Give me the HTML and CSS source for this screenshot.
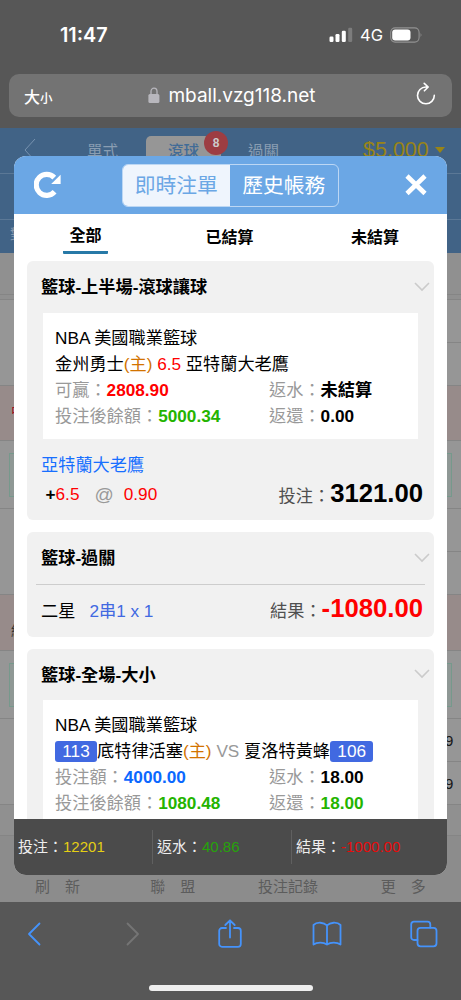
FILE: index.html
```html
<!DOCTYPE html>
<html lang="zh-Hant">
<head>
<meta charset="utf-8">
<meta name="viewport" content="width=device-width">
<title>即時注單</title>
<link rel="stylesheet" href="styles.css">
</head>
<body>
<div class="phone">
  <header class="browser-top">
    <div class="status">
      <span class="time">11:47</span>
      <span class="signals">
        <svg class="bars" width="24" height="16" viewBox="0 0 24 16"><rect x="0.5" y="9.5" width="4" height="5.5" rx="1.2" fill="#fff"/><rect x="6.5" y="7" width="4" height="8" rx="1.2" fill="#fff"/><rect x="12.8" y="3.8" width="4" height="11.2" rx="1.2" fill="#fff"/><rect x="19.2" y="0.8" width="4" height="14.2" rx="1.2" fill="#7c7c7c"/></svg>
        <span class="net">4G</span>
        <svg class="battery" width="33" height="16" viewBox="0 0 33 16"><rect x="0.7" y="0.9" width="28.4" height="14.2" rx="4.5" fill="none" stroke="#929292" stroke-width="1.1"/><rect x="2.2" y="2.5" width="18.3" height="11" rx="3" fill="#fff"/><path d="M30.6 5.8q1.8 2.2 0 4.5z" fill="#929292"/></svg>
      </span>
    </div>
    <div class="address">
      <span class="size">大<small>小</small></span>
      <span class="url"><svg width="12" height="17" viewBox="0 0 12 17"><path d="M3 8V4.5a3 3.4 0 0 1 6 0V8" fill="none" stroke="#b8b7bd" stroke-width="1.3"/><rect x="0.4" y="7" width="11" height="9" rx="1.5" fill="#b8b7bd"/></svg>mball.vzg118.net</span>
      <svg class="reload" width="20" height="24" viewBox="0 0 20 24" fill="none" stroke="#fff" stroke-width="1.6" stroke-linecap="round" stroke-linejoin="round"><path d="M12 5H9.900a8.400 8.400 0 1 0 8.400 8.400M8.200 1.300L12.200 5 8.400 8.800"/></svg>
    </div>
  </header>

  <main class="page">
    <div class="site-nav">
      <svg class="nav-back" width="12" height="24" viewBox="0 0 12 24"><path d="M11 1L1 12L11 23" fill="none" stroke="#7893b0" stroke-width="1"/></svg>
      <span class="nav-item">單式</span>
      <span class="nav-item active">滾球<b class="badge">8</b></span>
      <span class="nav-item">過關</span>
      <span class="balance">$5,000<i class="caret"></i></span>
    </div>
    <div class="site-sub"></div>
    <div class="site-head">對</div>
    <div class="row gap-a"></div>
    <div class="row gap-b"></div>
    <div class="row pair"><i></i></div>
    <div class="row pink red">中</div>
    <div class="row pick"><i></i></div>
    <div class="row pair"><i></i></div>
    <div class="row pink">紐</div>
    <div class="row pick"><i></i></div>
    <div class="row pair last"><i>9</i><i>9</i></div>
    <div class="row gap-c"></div>
    <nav class="site-foot"><span>刷　新</span><span>聯　盟</span><span>投注記錄</span><span>更　多</span></nav>

    <section class="modal">
      <div class="modal-head">
        <svg width="28" height="28" viewBox="0 0 28 28"><path d="M20.600 20.800A10.500 10.500 0 1 1 20.300 6.600" fill="none" stroke="#fff" stroke-width="5.200"/><path d="M26.600 3.800V13H17.200Z" fill="#fff"/></svg>
        <div class="switch"><span class="on">即時注單</span><span>歷史帳務</span></div>
        <svg width="28" height="28" viewBox="0 0 28 28"><path d="M5 5L23 22.5M23 5L5 22.5" stroke="#fff" stroke-width="4.6"/></svg>
      </div>
      <div class="tabs"><span class="on">全部</span><span>已結算</span><span>未結算</span></div>
      <div class="list">
        <article class="card first">
          <h3>籃球-上半場-滾球讓球<svg width="16" height="10" viewBox="0 0 16 10"><path d="M1 1L8 8L15 1"/></svg></h3>
          <div class="detail">
            <p>NBA 美國職業籃球</p>
            <p>金州勇士<span class="home">(主)</span> <span class="red-text">6.5</span> 亞特蘭大老鷹</p>
            <p class="pairs"><span>可贏：<b class="red-text">2808.90</b></span><span>返水：<b>未結算</b></span></p>
            <p class="pairs"><span>投注後餘額：<b class="green">5000.34</b></span><span>返還：<b>0.00</b></span></p>
          </div>
          <p class="team">亞特蘭大老鷹</p>
          <div class="stake"><span class="odds"><b>+</b><em>6.5</em><span class="at">@</span><em>0.90</em></span><span class="sum">投注：<b>3121.00</b></span></div>
        </article>
        <article class="card parlay">
          <h3>籃球-過關<svg width="16" height="10" viewBox="0 0 16 10"><path d="M1 1L8 8L15 1"/></svg></h3>
          <div class="stake"><span>二星<span class="combo">2串1 x 1</span></span><span class="sum loss">結果：<b>-1080.00</b></span></div>
        </article>
        <article class="card">
          <h3>籃球-全場-大小<svg width="16" height="10" viewBox="0 0 16 10"><path d="M1 1L8 8L15 1"/></svg></h3>
          <div class="detail">
            <p>NBA 美國職業籃球</p>
            <p><span class="score">113</span>底特律活塞<span class="home">(主)</span> <span class="vs">VS</span> 夏洛特黃蜂<span class="score">106</span></p>
            <p class="pairs"><span>投注額：<b class="blue">4000.00</b></span><span>返水：<b>18.00</b></span></p>
            <p class="pairs"><span>投注後餘額：<b class="green">1080.48</b></span><span>返還：<b class="green">18.00</b></span></p>
          </div>
        </article>
      </div>
      <div class="totals"><span>投注：<i class="t-yellow">12201</i></span><span>返水：<i class="t-green">40.86</i></span><span>結果：<i class="t-red">-1000.00</i></span></div>
    </section>
  </main>

  <footer class="browser-bottom">
    <div class="tools">
      <svg width="14" height="24" viewBox="0 0 14 24"><path d="M12.5 1.5L2 12L12.5 22.5"/></svg>
      <svg class="off" width="14" height="24" viewBox="0 0 14 24"><path d="M1.5 1.5L12 12L1.5 22.5"/></svg>
      <svg width="24" height="30" viewBox="0 0 24 30"><path d="M8 9H4a2.800 2.800 0 0 0-2.800 2.800V25A2.800 2.800 0 0 0 4 27.800H20A2.800 2.800 0 0 0 22.800 25V11.800A2.800 2.800 0 0 0 20 9H16M12 18.500V1.500M7.300 6L12 1.300L16.700 6"/></svg>
      <svg width="30" height="26" viewBox="0 0 30 26"><path d="M15 4.500C12 1.300 5 .5 1.500 4V23.500C5 21 11.500 21 15 23.500C18.500 21 25 21 28.500 23.500V4C25 .5 18 1.300 15 4.500V23.500"/></svg>
      <svg width="28" height="28" viewBox="0 0 28 28"><path d="M7.500 20H4A2.800 2.800 0 0 1 1.200 17.200V4.500A2.800 2.800 0 0 1 4 1.700H17.500A2.800 2.800 0 0 1 20.300 4.500V7.500"/><rect x="7.500" y="7.800" width="19" height="18.500" rx="3"/></svg>
    </div>
    <div class="home-bar"></div>
  </footer>
</div>
</body>
</html>
```
FILE: styles.css
```css
* { box-sizing: border-box; }
body { margin: 0; background: #575757; font-family: "Liberation Sans", "Noto Sans CJK TC", sans-serif; font-size: 17.2px; color: #000; }
p, h3 { margin: 0; }
i, em { font-style: normal; }
svg { display: block; flex: none; }
.phone { display: flex; flex-direction: column; width: 461px; height: 1000px; overflow: hidden; background: #575757; }

.browser-top { flex: none; height: 128px; color: #fff; font-family: Inter, "Noto Sans CJK TC", sans-serif; }
.status { display: flex; justify-content: space-between; align-items: center; height: 74px; padding: 0 38px 5px 60px; }
.time { font-size: 19.8px; font-weight: 600; }
.signals { display: flex; align-items: center; }
.net { margin: 1px 7px 0 7px; font-size: 16.5px; font-weight: 400; }
.address { display: flex; justify-content: space-between; align-items: center; height: 43px; margin: 0 9px; padding: 0 16px 0 15px; border-radius: 10px; background: #737373; }
.size { width: 60px; font-size: 16px; font-weight: 500; }
.size small { font-size: 12.5px; }
.url { display: flex; align-items: center; gap: 8px; margin-right: 36px; font-size: 19px; }
.reload { margin-bottom: 3px; }

.page { position: relative; flex: none; height: 774px; background: #969696; }
.site-nav { display: flex; align-items: center; height: 46px; padding-left: 24px; background: #416386; border-bottom: 1px solid #5b7896; color: #899db2; font-size: 15.5px; }
.nav-back { margin-bottom: 2px; }
.nav-item { position: relative; width: 75px; height: 31px; line-height: 31px; border-radius: 5px; text-align: center; margin-left: 29px; margin-top: 1px; }
.nav-item + .nav-item { margin-left: 5px; }
.nav-item + .nav-item.active { margin-left: 6px; background: #969696; color: #416b97; font-weight: 500; }
.badge { position: absolute; top: -5px; right: -7px; width: 24px; height: 24px; border-radius: 50%; background: #9d3d42; color: #ccc; font-size: 12px; line-height: 24px; text-align: center; }
.balance { display: flex; align-items: center; gap: 6px; margin: 0 0 1px 62px; font-size: 21.5px; color: #998416; }
.caret { border: 5px solid transparent; border-top: 6px solid #998416; border-bottom: 0; }
.site-sub { height: 46px; background: #416386; border-bottom: 1px solid #5b7896; }
.site-head { height: 33px; padding-left: 10px; line-height: 28px; background: #416386; color: #8799ad; font-size: 14px; }
.row { border-bottom: 1px solid #858585; }
.gap-a { height: 42px; background: #909090; }
.gap-b { height: 5px; background: #909090; }
.gap-c { height: 31px; background: #909090; }
.pair { height: 86px; padding-left: 440px; }
.pair i { display: block; height: 43px; border-bottom: 1px solid #858585; }
.pair.last i { line-height: 43px; padding-left: 5px; font-size: 15px; color: #161616; }
.pair.last i:last-child { border: 0; }
.pink { height: 56px; padding-left: 11px; line-height: 72px; background: #978b8a; font-size: 14px; color: #333; }
.pink.red { height: 55px; line-height: 51px; color: #a00e20; }
.pick { height: 68px; padding: 12px 9px; }
.pick i { display: block; height: 44px; border: 1.5px solid #76998c; background: #8f9895; }
.site-foot { display: grid; grid-template-columns: repeat(4, 1fr); height: 66px; padding-top: 40px; background: #8c8c8c; color: #5c5c5c; font-size: 15px; line-height: 22px; text-align: center; }

.modal { position: absolute; left: 14px; top: 27.5px; width: 433px; height: 719px; display: flex; flex-direction: column; overflow: hidden; border-radius: 12px; background: #fff; }
.modal-head { display: flex; flex: none; justify-content: space-between; align-items: center; height: 58.5px; padding: 0 17px 0 20px; background: #6ba7e5; }
.switch { display: flex; width: 217px; height: 43px; margin: 1px 4px 0 0; border: 1px solid #bcd7f4; border-radius: 6px; overflow: hidden; font-size: 20.8px; line-height: 42px; color: #fff; }
.switch span { flex: 1; text-align: center; }
.switch .on { background: #eff5fd; color: #6ba7e5; }
.tabs { display: flex; justify-content: space-between; align-items: flex-start; flex: none; height: 47px; padding: 8px 48px 0 49px; font-size: 16px; font-weight: 600; line-height: 32px; }
.tabs .on { width: 45px; height: 32px; line-height: 28px; border-bottom: 3px solid #2779a7; border-radius: 1px; text-align: center; }
.list { flex: 1; min-height: 0; display: flex; flex-direction: column; gap: 12px; padding: 0 13px; overflow: hidden; }
.card { flex: none; border-radius: 6px; background: #f1f1f1; }
.card.first { height: 259px; }
.card h3 { display: flex; justify-content: space-between; align-items: center; height: 51.5px; padding: 0 4px 2px 14px; font-size: 17.2px; font-weight: 600; }
.card h3 svg { margin-top: 2px; }
.card h3 svg path { fill: none; stroke: #cbcbcb; stroke-width: 1.6; }
.detail { height: 126.5px; margin: 0 16.5px 0 16px; padding: 12px 12px 0; background: #fff; line-height: 26px; white-space: nowrap; }
.detail p { height: 26px; }
.pairs { display: grid; grid-template-columns: 214px 1fr; color: #999; }
.pairs b { color: #000; }
.pairs .red-text, .red-text { color: #f00; }
.pairs .green { color: #24b400; }
.pairs .blue { color: #0a68ff; }
.home { color: #d27300; }
.vs { color: #999; }
.score { display: inline-block; height: 21px; padding: 0 7.300px; border-radius: 3px; background: #4169e1; color: #fff; line-height: 21px; }
.team { padding: 13px 14px 0; line-height: 26px; color: #176fff; }
.stake { display: flex; justify-content: space-between; align-items: center; height: 33px; padding: 0 11px 0 14.5px; }
.odds { display: flex; align-items: center; padding-left: 4px; }
.odds em { color: #f00; }
.at { margin: 0 10px 0 15px; color: #999; font-size: 19px; }
.sum { display: flex; align-items: center; color: #4f4f4f; }
.sum b { margin-bottom: 3px; font-size: 25.7px; line-height: 28px; color: #000; }
.sum.loss b { color: #f00; }
.parlay { height: 104.5px; }
.parlay .stake { height: 51px; margin: 0 9px; padding: 0 2px 0 5px; border-top: 1px solid #cdcdcd; }
.combo { margin-left: 14px; color: #4169e1; }
.totals { flex: none; display: grid; grid-template-columns: repeat(3, 139px); align-items: center; height: 55.5px; background: #4b4b4b; color: #eee; font-size: 15px; }
.totals span { height: 34px; padding-left: 4px; line-height: 33px; border-right: 1px solid #606060; white-space: nowrap; }
.totals span:last-child { border: 0; }
.t-yellow { color: #e5cf14; }
.t-green { color: #26a30a; }
.t-red { color: #e60c0c; }

.browser-bottom { display: flex; flex: none; flex-direction: column; justify-content: space-between; align-items: center; height: 98px; padding: 16px 0 9px; }
.tools { display: grid; grid-template-columns: 102px 97px 97px 97px 97px; justify-content: center; justify-items: center; align-items: center; height: 32px; margin-right: 6px; }
.tools path, .tools rect { fill: none; stroke: #4593fb; stroke-width: 1.8; stroke-linecap: round; stroke-linejoin: round; }
.tools .off path { stroke: #757575; }
.home-bar { width: 164px; height: 6px; border-radius: 3px; background: #eee; }
```
